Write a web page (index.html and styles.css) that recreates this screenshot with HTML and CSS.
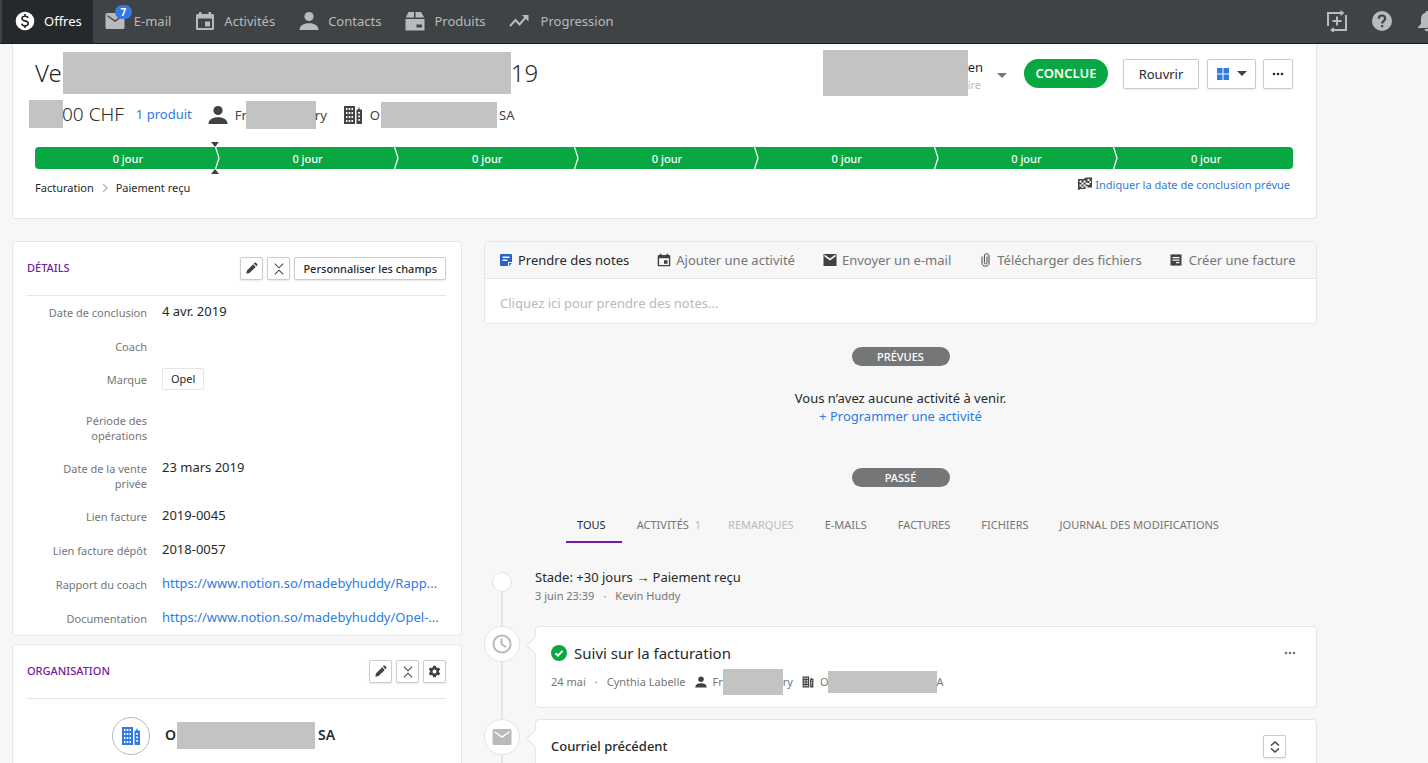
FILE: index.html
```html
<!DOCTYPE html>
<html lang="fr">
<head>
<meta charset="utf-8">
<meta name="viewport" content="width=device-width, initial-scale=1">
<title>Offres</title>
<link rel="stylesheet" href="styles.css">
</head>
<body>
<svg class="sprite" aria-hidden="true">
  <symbol id="person" viewBox="0 0 20 20"><circle cx="10" cy="5.500" r="4.600"/><path d="M0.500 19c0-4.500 4-6.800 9.500-6.800s9.500 2.300 9.500 6.800z"/></symbol>
  <symbol id="building" viewBox="0 0 20 20"><path fill-rule="evenodd" d="M1 1h11v18H1zM3 3v2h1.500V3zm2.800 0v2h1.500V3zm2.700 0v2H10V3zM3 7v2h1.500V7zm2.800 0v2h1.500V7zm2.700 0v2H10V7zM3 11v2h1.500v-2zm2.800 0v2h1.500v-2zm2.700 0v2H10v-2zM3 15v2h1.500v-2zm2.800 0v2h1.500v-2zm2.700 0v2H10v-2zM13.500 5l2-1V2.500h1V4l2.500 1v14h-5.500zM15.200 7v1.800H17V7zm0 3.500v1.800H17v-1.800zm0 3.500v1.800H17V14z"/></symbol>
  <symbol id="calendar" viewBox="0 0 20 20"><path fill-rule="evenodd" d="M4 1h2.500v2h7V1H16v2h1.500A1.500 1.500 0 0 1 19 4.500v13a1.500 1.500 0 0 1-1.500 1.500h-15A1.500 1.500 0 0 1 1 17.500v-13A1.500 1.500 0 0 1 2.500 3H4zM3 7.500V17h14V7.500zM10 10.500h5v5h-5z"/></symbol>
  <symbol id="mail" viewBox="0 0 20 20"><path fill-rule="evenodd" d="M2 2h16a1.500 1.500 0 0 1 1.500 1.500v13A1.500 1.500 0 0 1 18 18H2a1.500 1.500 0 0 1-1.500-1.500v-13A1.500 1.500 0 0 1 2 2zM2.500 4v1.500L10 11l7.500-5.500V4L10 9.200z"/></symbol>
  <symbol id="pencil" viewBox="0 0 20 20"><path d="M2 18l1-5L12.500 3.500l4 4L7 17zM13.600 2.400l1.200-1.200c.6-.6 1.400-.6 2 0l2 2c.6.6.6 1.400 0 2l-1.200 1.200z"/></symbol>
  <symbol id="collapse" viewBox="0 0 20 20"><path d="M3 1l7 7 7-7M3 19l7-7 7 7" fill="none" stroke="currentColor" stroke-width="1.800"/></symbol>
  <symbol id="dots" viewBox="0 0 12 4"><circle cx="2" cy="2" r="1.300"/><circle cx="6" cy="2" r="1.300"/><circle cx="10" cy="2" r="1.300"/></symbol>
</svg>
<nav class="nav">
  <a class="nav-item active" href="#"><svg class="i20" viewBox="0 0 20 20"><circle cx="10" cy="10" r="9.300"/><path class="cut" d="M13 7c-.3-1.300-1.400-1.800-3-1.800-1.700 0-3 .8-3 2.200C7 10.700 13.200 9 13.200 12.500c0 1.500-1.400 2.300-3.200 2.300S7 14 6.800 12.600M10 3v2.200M10 14.800V17"/></svg>Offres</a>
  <a class="nav-item mail" href="#"><span class="with-badge"><svg class="i20"><use href="#mail"/></svg><span class="badge">7</span></span>E-mail</a>
  <a class="nav-item" href="#"><svg class="i20"><use href="#calendar"/></svg>Activités</a>
  <a class="nav-item" href="#"><svg class="i20"><use href="#person"/></svg>Contacts</a>
  <a class="nav-item" href="#"><svg class="i20" viewBox="0 0 20 20"><path fill-rule="evenodd" d="M3.500 1H9v5.500H.8zM10.500 1H16l3.200 5.500h-8.700zM.5 8h19v11.500H.5zM11.500 13.500v3H17v-3z"/></svg>Produits</a>
  <a class="nav-item wide" href="#"><svg class="i20" viewBox="0 0 20 20"><path class="line" d="M1 15l5.500-6 4 4.500 7-8"/><path d="M13 4h6.500v6.500z"/></svg>Progression</a>
  <div class="nav-tools">
    <button class="tool" aria-label="Ajouter"><svg class="i22" viewBox="0 0 22 22"><path class="line" d="M2 16V3h15M20 5v15H6M11 6.500v9M6.500 11h9"/><path d="M14.500 0l4 3-4 3zM8 17l-4 3 4 3z"/></svg></button>
    <button class="tool" aria-label="Aide"><svg class="i22" viewBox="0 0 22 22"><circle cx="11" cy="11" r="10"/><path class="q" d="M7.800 8.700c0-2 1.300-3.200 3.200-3.200s3.200 1.100 3.200 2.900c0 2.300-3.100 2.500-3.100 5M11.100 15v2.300"/></svg></button>
    <button class="tool" aria-label="Notifications"><svg class="i22" viewBox="0 0 22 22"><path d="M11 1c1 0 1.600.7 1.600 1.700 3 .8 4.400 3 4.400 6.300v5l3 3v1H2v-1l3-3V9c0-3.300 1.400-5.500 4.400-6.300C9.400 1.700 10 1 11 1zM8.500 19h5c0 3-5 3-5 0z"/></svg></button>
  </div>
</nav>
<main class="page">
  <header class="card deal">
    <div class="deal-top">
      <h1 class="title">Ve<span class="redact r-title"></span>19</h1>
      <div class="actions">
        <div class="owner"><span class="redact r-owner"></span><div class="owner-text"><span>en</span><small>ire</small></div></div>
        <span class="caret light"></span>
        <span class="status">CONCLUE</span>
        <button class="btn big">Rouvrir</button>
        <button class="btn big view" aria-label="Affichage"><svg class="i12 blue" viewBox="0 0 12 12"><path d="M0 0h5.500v5.500H0zM6.500 0H12v5.500H6.500zM0 6.500h5.500V12H0zM6.500 6.500H12V12H6.500z"/></svg><span class="caret"></span></button>
        <button class="btn big more" aria-label="Plus"><svg class="dots"><use href="#dots"/></svg></button>
      </div>
    </div>
    <div class="deal-info">
      <span class="amount"><span class="redact r-amount"></span>00 CHF</span>
      <a class="link" href="#">1 produit</a>
      <span class="entity"><svg class="i20"><use href="#person"/></svg><span class="who">Fr<span class="redact r-person"></span>ry</span></span>
      <span class="entity"><svg class="i20"><use href="#building"/></svg><span class="who">O<span class="redact r-org"></span>SA</span></span>
    </div>
    <ol class="stages">
      <li class="stage current">0 jour<svg class="chev" viewBox="0 0 5 22"><path d="M.5 0l3.500 11L.5 22"/></svg></li>
      <li class="stage">0 jour<svg class="chev" viewBox="0 0 5 22"><path d="M.5 0l3.500 11L.5 22"/></svg></li>
      <li class="stage">0 jour<svg class="chev" viewBox="0 0 5 22"><path d="M.5 0l3.500 11L.5 22"/></svg></li>
      <li class="stage">0 jour<svg class="chev" viewBox="0 0 5 22"><path d="M.5 0l3.500 11L.5 22"/></svg></li>
      <li class="stage">0 jour<svg class="chev" viewBox="0 0 5 22"><path d="M.5 0l3.500 11L.5 22"/></svg></li>
      <li class="stage">0 jour<svg class="chev" viewBox="0 0 5 22"><path d="M.5 0l3.500 11L.5 22"/></svg></li>
      <li class="stage">0 jour</li>
    </ol>
    <div class="deal-foot">
      <div class="crumbs"><span>Facturation</span><svg class="sep" viewBox="0 0 6 8"><path d="M1 0l4 4-4 4"/></svg><span>Paiement reçu</span></div>
      <a class="link close-date" href="#"><svg class="i14" viewBox="0 0 14 14"><path fill-rule="evenodd" d="M0 2h5.500L8 .5h6v10H9L6.500 12H1.500v1H0zM1.500 3.500v2h2v-2zm4 0v2h2v-2zm4-1.500v2h2V2zM3.500 5.500v2h2v-2zm4 0v2h2v-2zm4-1.500v2H13V4zM1.500 7.500v2h2v-2zm4 0v2h2v-2zm4-1.500v2h2V6zM3.500 9.500V11h2V9.500zm4-.5v1.500h2V9z"/></svg>Indiquer la date de conclusion prévue</a>
    </div>
  </header>
  <div class="columns">
    <aside class="side">
      <section class="card panel">
        <div class="panel-head"><h2>DÉTAILS</h2>
          <button class="btn sq" aria-label="Modifier"><svg class="i13"><use href="#pencil"/></svg></button>
          <button class="btn sq" aria-label="Réduire"><svg class="i12"><use href="#collapse"/></svg></button>
          <button class="btn small">Personnaliser les champs</button>
        </div>
        <dl class="fields">
          <div class="field"><dt>Date de conclusion</dt><dd>4 avr. 2019</dd></div>
          <div class="field"><dt>Coach</dt><dd></dd></div>
          <div class="field tagged"><dt>Marque</dt><dd><span class="tag">Opel</span></dd></div>
          <div class="field"><dt>Période des opérations</dt><dd></dd></div>
          <div class="field"><dt>Date de la vente privée</dt><dd>23 mars 2019</dd></div>
          <div class="field"><dt>Lien facture</dt><dd>2019-0045</dd></div>
          <div class="field"><dt>Lien facture dépôt</dt><dd>2018-0057</dd></div>
          <div class="field"><dt>Rapport du coach</dt><dd><a class="link" href="#">https://www.notion.so/madebyhuddy/Rapp...</a></dd></div>
          <div class="field"><dt>Documentation</dt><dd><a class="link" href="#">https://www.notion.so/madebyhuddy/Opel-...</a></dd></div>
        </dl>
      </section>
      <section class="card panel">
        <div class="panel-head"><h2>ORGANISATION</h2>
          <button class="btn sq" aria-label="Modifier"><svg class="i13"><use href="#pencil"/></svg></button>
          <button class="btn sq" aria-label="Réduire"><svg class="i12"><use href="#collapse"/></svg></button>
          <button class="btn sq" aria-label="Réglages"><svg class="i13" viewBox="0 0 20 20"><path fill-rule="evenodd" d="M8 1h4l.6 2.600 1.600.9 2.600-.8 2 3.500-2 1.800v2l2 1.800-2 3.500-2.600-.8-1.600.9L12 19H8l-.6-2.600-1.600-.9-2.600.8-2-3.500 2-1.800V9l-2-1.800 2-3.500 2.600.8 1.600-.9zM10 7a3 3 0 1 0 0 6 3 3 0 0 0 0-6z"/></svg></button>
        </div>
        <div class="org"><span class="org-pic"><svg class="i20 blue"><use href="#building"/></svg></span><strong class="who">O<span class="redact r-org2"></span>SA</strong></div>
      </section>
    </aside>
    <section class="feed">
      <div class="card composer">
        <div class="composer-tabs">
          <button class="ctab on"><svg class="i12" viewBox="0 0 12 12"><path fill-rule="evenodd" d="M1 0h10a1 1 0 0 1 1 1v7H8v4H1a1 1 0 0 1-1-1V1a1 1 0 0 1 1-1zM2.500 2.500V4h7V2.500zm0 3V7h5V5.500zM9 9h3l-3 3z"/></svg>Prendre des notes</button>
          <button class="ctab"><svg class="i14"><use href="#calendar"/></svg>Ajouter une activité</button>
          <button class="ctab"><svg class="i14" viewBox="0 0 14 14"><path fill-rule="evenodd" d="M.5 1h13v12H.5zM1.500 1.500v2L7 7.500l5.500-4v-2L7 5.500z"/></svg>Envoyer un e-mail</button>
          <button class="ctab roomy"><svg class="paper" viewBox="0 0 9 14"><path d="M6 3.500v6.300c0 1.500-2.600 1.500-2.600 0V3c0-3 4.600-3 4.600 0v7.200c0 4-7 4-7 0V3.500"/></svg>Télécharger des fichiers</button>
          <button class="ctab roomy"><svg class="i12" viewBox="0 0 12 12"><path fill-rule="evenodd" d="M.5 0l1.500.8L3.500 0 5 .8 6 0l1 .8L8.500 0l1.500.8 1.500-.8v12l-1.500-.8-1.500.8-1.500-.8-1 .8-1-.8-1.500.8-1.500-.8-1.500.8zM2.500 3v1.200h7V3zm0 2.500v1.200h7V5.500zM6 8v1.200h3.500V8z"/></svg>Créer une facture</button>
        </div>
        <input class="note" type="text" aria-label="Note" placeholder="Cliquez ici pour prendre des notes...">
      </div>
      <div class="pill">PRÉVUES</div>
      <p class="empty">Vous n’avez aucune activité à venir.<br><a class="link" href="#">+ Programmer une activité</a></p>
      <div class="pill">PASSÉ</div>
      <div class="filters">
        <button class="filter on">TOUS</button><button class="filter">ACTIVITÉS <span class="count">1</span></button><button class="filter" disabled>REMARQUES</button><button class="filter">E-MAILS</button><button class="filter">FACTURES</button><button class="filter">FICHIERS</button><button class="filter">JOURNAL DES MODIFICATIONS</button>
      </div>
      <ul class="timeline">
        <li class="event first"><div class="rail"><span class="dot"></span></div>
          <div class="plain"><p class="line1">Stade: +30 jours → Paiement reçu</p><p class="meta"><span>3 juin 23:39</span><span>·</span><span>Kevin Huddy</span></p></div></li>
        <li class="event"><div class="rail"><span class="node"><svg class="i20" viewBox="0 0 20 20"><circle class="line" cx="10" cy="10" r="8.600"/><path class="line" d="M9.500 4.500V10l4.500 3.200"/></svg></span></div>
          <article class="card bubble"><div class="bubble-head"><svg class="i16 green" viewBox="0 0 16 16"><circle cx="8" cy="8" r="8"/><path class="check" d="M4.500 8.200l2.500 2.400 4.500-4.700"/></svg><h3>Suivi sur la facturation</h3><button class="menu" aria-label="Plus"><svg class="dots"><use href="#dots"/></svg></button></div>
            <p class="meta"><span>24 mai</span><span>·</span><span>Cynthia Labelle</span><span class="mini"><svg class="i12"><use href="#person"/></svg><span class="who">Fr<span class="redact r-p2"></span>ry</span></span><span class="mini"><svg class="i12"><use href="#building"/></svg><span class="who">O<span class="redact r-o2"></span>A</span></span></p></article></li>
        <li class="event"><div class="rail"><span class="node"><svg class="i20"><use href="#mail"/></svg></span></div>
          <article class="card bubble mailcard"><h3 class="strong">Courriel précédent</h3><button class="btn sq" aria-label="Développer"><svg class="updown" viewBox="0 0 10 12"><path d="M1 4.500L5 1l4 3.500M1 7.500L5 11l4-3.500"/></svg></button></article></li>
      </ul>
    </section>
  </div>
</main>
</body>
</html>
```
FILE: styles.css
```css
* { box-sizing: border-box; }
body, h1, h2, h3, p, ol, ul, dl, dd { margin: 0; padding: 0; }
body {
  height: 100vh; overflow: hidden; display: flex; flex-direction: column;
  background: #f7f7f7; color: #26292c;
  font: 13px/18px "Noto Sans", "Open Sans", sans-serif;
}
ol, ul { list-style: none; }
a { text-decoration: none; }
button, input { font: inherit; color: inherit; }
button { cursor: pointer; padding: 0; border: 0; background: none; }
svg { fill: currentColor; flex: none; display: block; }
.sprite { position: absolute; width: 0; height: 0; }
.i12 { width: 12px; height: 12px; }
.i13 { width: 13px; height: 13px; }
.i14 { width: 14px; height: 14px; }
.i16 { width: 16px; height: 16px; }
.i20 { width: 20px; height: 20px; }
.i22 { width: 22px; height: 22px; }
.dots { width: 12px; height: 4px; }
.line { fill: none; stroke: currentColor; stroke-width: 2; }
.blue { color: #317ae2; }
.green { color: #08a742; }
.link { color: #317ae2; }

.nav {
  display: flex; flex: none; height: 44px; padding-left: 2px; overflow: hidden;
  background: #404346; color: #b9babb; border-bottom: 1px solid #1a1c1e;
}
.nav-item { display: flex; align-items: center; gap: 9px; padding: 0 12px 2px; color: inherit; }
.nav-item.wide { gap: 12px; padding-left: 11px; }
.nav-item.active { background: #26292c; color: #fff; }
.nav-item.active { padding-left: 13px; padding-right: 11px; }
.cut { fill: none; stroke: #26292c; stroke-width: 1.600; }
.with-badge { position: relative; }
.badge {
  position: absolute; left: 10px; top: -6px; width: 17px; height: 14px; border-radius: 7px;
  background: #317ae2; color: #fff; font-size: 10px; line-height: 14px; font-weight: 700; text-align: center;
}
.nav-tools { margin: 0 -10px 0 auto; padding-bottom: 1px; display: flex; align-items: center; gap: 23px; }
.q { fill: none; stroke: #404346; stroke-width: 2.200; }

.page { padding: 0 111px 0 12px; }
.card { background: #fff; border: 1px solid #e5e5e5; border-radius: 4px; }
.redact { display: inline-block; background: #c3c3c3; flex: none; }
.btn {
  display: flex; align-items: center; justify-content: center;
  border: 1px solid #cbcccd; border-radius: 2px; background: #fff;
  box-shadow: 0 1px 2px rgba(38, 41, 44, .1);
}
.caret { border: 5px solid transparent; border-top: 5px solid #404346; border-bottom: 0; }
.caret.light { border-top-color: #747678; margin: 4px 17px 0 14px; }

.deal { border-top: 0; border-radius: 0 0 4px 4px; padding: 4px 23px 0 22px; height: 175px; }
.deal-top { display: flex; align-items: center; justify-content: space-between; height: 50px; }
.title { display: flex; align-items: center; font-size: 24px; font-weight: 300; line-height: 42px; }
.r-title { width: 448px; height: 42px; margin-left: 1px; }
.actions { display: flex; align-items: center; }
.owner { display: flex; align-items: center; }
.r-owner { width: 145px; height: 46px; }
.owner-text { display: flex; flex-direction: column; padding-top: 6px; line-height: 17px; }
.owner-text small { font-size: 11px; color: #b9babb; }
.status {
  width: 84px; border-radius: 15px; background: #08a742; color: #fff;
  font-weight: 600; line-height: 29px; text-align: center;
}
.btn.big { height: 30px; margin-top: 1px; }
.status + .btn { width: 76px; margin-left: 15px; }
.view { width: 49px; margin-left: 8px; gap: 8px; }
.more { width: 30px; margin-left: 7px; }

.deal-info { display: flex; align-items: center; height: 32px; }
.who { display: flex; align-items: center; }
.amount { display: flex; align-items: center; font-size: 19px; font-weight: 300; margin: 0 12px 0 -6px; }
.r-amount { width: 34px; height: 28px; margin-right: -1px; }
.entity { display: flex; align-items: center; gap: 7px; margin-left: 16px; padding-top: 2px; color: #404346; }
.r-person { width: 70px; height: 28px; margin: 0 -1px; }
.r-org { width: 116px; height: 26px; margin: 0 2px 0 1px; }

.stages { display: flex; margin-top: 17px; border-radius: 4px; background: #08a742; color: #fff; }
.stage { position: relative; flex: 1; height: 22px; padding-left: 6px; text-align: center; font-size: 11px; font-weight: 500; line-height: 24px; }
.chev { position: absolute; right: -5px; top: 0; width: 5px; height: 22px; fill: none; stroke: #fff; stroke-width: 1.300; }
.current::before, .current::after {
  content: ""; position: absolute; right: -4px; border: 4px solid transparent;
}
.current::before { top: -5px; border-top: 5px solid #404346; border-bottom: 0; }
.current::after { bottom: -5px; border-bottom: 5px solid #404346; border-top: 0; }
.deal-foot { display: flex; justify-content: space-between; margin: 8px 3px 0 0; font-size: 11px; line-height: 16px; }
.crumbs { display: flex; align-items: center; gap: 8px; margin-top: 3px; }
.sep { width: 6px; height: 8px; fill: none; stroke: #b9babb; stroke-width: 1.500; }
.close-date { display: flex; gap: 3px; align-self: flex-start; }
.close-date svg { color: #404346; }

.columns { display: grid; grid-template-columns: 450px minmax(0, 1fr); gap: 22px; margin-top: 22px; }
.panel { padding: 0 15px 0 14px; margin-bottom: 8px; }
.panel-head { display: flex; align-items: center; gap: 4px; height: 54px; border-bottom: 1px solid #e5e5e5; }
.panel-head h2 { flex: 1; padding-bottom: 2px; font-size: 11px; font-weight: 500; color: #721aa3; }
.btn.sq { width: 23px; height: 23px; color: #404346; }
.btn.small { height: 23px; padding: 0 8px; font-size: 11px; font-weight: 500; }
.fields { padding-bottom: 3px; }
.field { display: grid; grid-template-columns: 120px 1fr; gap: 15px; min-height: 34px; padding: 9px 0 9px; }
.field:last-child { min-height: 30px; padding-bottom: 0; }
.field dt { padding-left: 16px; text-align: right; font-size: 11px; line-height: 15px; color: #747678; }
.field dd { margin-top: -1px; line-height: 15px; white-space: nowrap; }
.field.tagged { min-height: 40px; padding: 8px 0 0; }
.tag { display: inline-block; margin-top: -3px; padding: 0 8px; border: 1px solid #e5e5e5; border-radius: 2px; font-size: 11px; line-height: 20px; }
.org { display: flex; align-items: center; gap: 15px; padding: 18px 84px 18px 85px; font-size: 14px; }
.org .who { padding-bottom: 2px; font-weight: 600; }
.org-pic { display: grid; place-items: center; width: 38px; height: 38px; border: 1px solid #b9babb; border-radius: 50%; }
.r-org2 { width: 138px; height: 27px; margin: 0 3px 0 1px; }

.composer { overflow: hidden; }
.composer-tabs { display: flex; gap: 28px; height: 37px; padding: 0 15px; background: #f7f7f7; border-bottom: 1px solid #e5e5e5; }
.ctab { display: flex; align-items: center; gap: 5px; color: #747678; white-space: nowrap; }
.ctab svg { color: #404346; }
.ctab.on { gap: 6px; color: #26292c; }
.ctab.on svg { color: #2a62c9; }
.ctab.roomy { gap: 7px; }
.ctab .paper { width: 9px; height: 14px; margin-left: 2px; fill: none; stroke: #404346; }
.note { display: block; width: 100%; height: 44px; padding: 4px 15px 0; border: 0; outline: 0; background: #fff; }
.note::placeholder { color: #b9babb; opacity: 1; }
.pill { width: 98px; margin: 23px auto 0; border-radius: 10px; background: #747678; color: #fff; text-align: center; font-size: 11px; line-height: 19px; font-weight: 500; }
.empty { margin: 23px 0 43px; text-align: center; }
.filters { display: flex; justify-content: center; gap: 4px; margin-top: 21px; }
.filter { padding: 0 16px 0 11px; font-size: 11px; line-height: 33px; color: #747678; border-bottom: 2px solid transparent; white-space: nowrap; }
.filter.on { color: #26292c; border-color: #721aa3; }
.filter:disabled, .count { color: #b9babb; }
.count { margin-right: -4px; padding-left: 3px; }

.timeline { margin-top: 25px; }
.event { display: grid; grid-template-columns: 36px minmax(0, 1fr); gap: 15px; }
.rail { display: flex; justify-content: center; background: linear-gradient(#e5e5e5, #e5e5e5) center / 2px 100% no-repeat; }
.dot { width: 20px; height: 20px; margin-top: 4px; border: 1px solid #e5e5e5; border-radius: 50%; background: #fff; }
.node { display: grid; place-items: center; width: 36px; height: 36px; border: 1px solid #e5e5e5; border-radius: 50%; background: #fff; color: #b9babb; }
.first { height: 58px; }
.first .rail { background-position: center 10px; }
.line1 { margin-bottom: 1px; }
.meta { display: flex; align-items: center; gap: 9px; font-size: 11px; color: #747678; white-space: nowrap; }
.bubble { position: relative; padding: 17px 20px 0 15px; height: 82px; margin-bottom: 11px; }
.bubble::before {
  content: ""; position: absolute; left: -7px; top: 12px; width: 12px; height: 12px;
  background: #fff; border: 1px solid #e5e5e5; border-width: 0 0 1px 1px; transform: rotate(45deg);
}
.bubble-head { display: flex; align-items: center; gap: 7px; margin-bottom: 7px; }
.bubble h3 { flex: 1; font-size: 15px; font-weight: 400; line-height: 18px; }
.bubble .strong { font-size: 13px; font-weight: 500; line-height: 22px; }
.menu { color: #747678; }
.check { fill: none; stroke: #fff; stroke-width: 2; }
.mini { display: flex; align-items: center; gap: 6px; }
.mini svg { color: #404346; }
.r-p2 { width: 60px; height: 26px; }
.r-o2 { width: 109px; height: 22px; margin-left: -1px; }
.mailcard { display: flex; align-items: flex-start; padding: 15px 30px 0 15px; }
.updown { width: 10px; height: 12px; fill: none; stroke: currentColor; stroke-width: 1.500; }
```
